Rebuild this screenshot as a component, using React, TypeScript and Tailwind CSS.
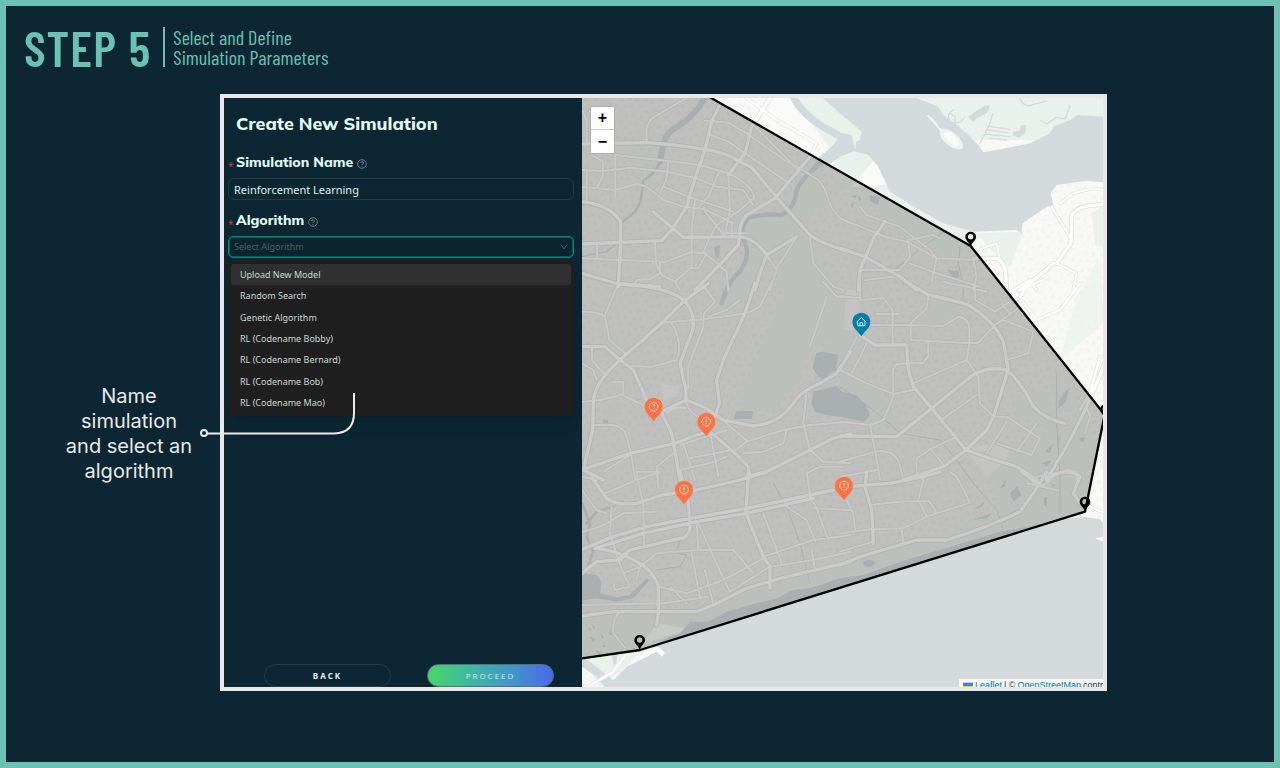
import React, { FC, useState } from "react";

const algorithms = [
  "Upload New Model",
  "Random Search",
  "Genetic Algorithm",
  "RL (Codename Bobby)",
  "RL (Codename Bernard)",
  "RL (Codename Bob)",
  "RL (Codename Mao)",
];

// map drawing is split in tiles, every tile has its own origin
const TILE_B = "translate(780 0)";
const TILE_C = "translate(0 570)";
const TILE_D = "translate(780 570)";
const TILE_E = "translate(0 1140)";
const TILE_F = "translate(780 1140)";

const BOUNDARY = "M-40 -40L280 -40L390 22L1172 468L1574 974L1515 1265L180 1680L-40 1712Z";

interface ITileRoads {
  tile?: string;
  main: string;
  minor: string;
}

const roads: ITileRoads[] = [
  {
    main:
      "M6 162 L200 158 Q300 165 375 178 Q440 188 480 215 L515 232 L590 322 L690 435 Q730 465 812 485 " +
      "M418 48 L395 95 L375 180 L345 265 L320 350 L275 420 L245 452 L6 462 M6 335 Q90 345 122 395 L122 458 L115 590 " +
      "M570 24 L515 110 L495 190 L445 255 M690 200 L585 325 L500 375 Q478 395 478 440 L475 465 L400 545 L345 600 " +
      "M220 365 L310 442 L475 440 Q520 440 560 495 L540 550 L525 600 M650 440 L565 492 M6 550 L115 582 L240 590",
    minor:
      "M375 92 L445 98 L500 130 L620 215 L660 235 L715 270 Q735 290 745 330 Q765 385 812 400 " +
      "M390 135 L445 155 L495 190 L620 275 M525 110 L655 240 M106 195 L265 213 L360 225 L440 248 Q520 285 522 325 L470 368 L410 405 L385 450 " +
      "M6 240 L70 243 L150 233 L262 245 L350 265 L410 290 L490 300 L520 345 M20 240 L20 330 M36 195 L70 215 L68 260 L50 295 M106 195 L106 320 " +
      "M6 290 L106 300 L170 282 L200 290 L250 330 L310 350 L372 357 L460 400 M265 213 L260 265 L240 310 M250 290 L325 320 L460 365 " +
      "M418 245 L385 320 L352 355 M445 255 L450 360 L435 430 M372 350 L375 365 L435 440 M345 330 L335 420 L335 530 " +
      "M320 24 L215 85 L200 110 L200 158 M6 60 L20 90 L20 160 M225 455 L228 520 L245 555 L285 575 M6 505 L120 510 L260 515 L330 487 L375 490 L440 545 L445 600 " +
      "M240 520 L240 550 L210 568 L170 570 L160 590 M285 575 L330 535 L355 535 L380 490 M285 575 L300 600 M425 430 L500 430 M455 395 L455 440 " +
      "M560 495 L590 540 L570 600 M650 440 L590 535 M690 445 L700 520 L760 590 L790 600 M50 462 L52 505 M385 450 L370 490",
  },
  {
    tile: TILE_B,
    main:
      "M0 475 L75 500 L180 560 L230 600 M135 395 L100 445 L60 540 L55 600 M640 520 L595 560 L540 600 M795 345 Q720 340 695 375 L693 460 L650 520 " +
      "M400 505 L470 505 Q495 515 497 550 L500 600",
    minor:
      "M0 385 L135 440 L200 455 L290 505 L400 510 M135 395 L180 410 L270 480 L290 505 L275 575 M205 450 L280 435 L300 445 M60 350 L80 375 L135 395 " +
      "M60 540 L180 540 L210 500 L205 450 M210 520 L290 550 L420 590 M75 570 L160 560 M400 505 L410 560 L400 600 M470 460 L478 505 M415 480 L470 460 " +
      "M695 450 L635 350 M795 300 L760 295 L700 310 L660 340 M650 520 L710 550 L700 600 M570 570 L590 600",
  },
  {
    tile: TILE_C,
    main:
      "M6 570 L150 520 L285 490 L350 465 L390 455 M385 10 L310 65 L245 130 L120 240 Q40 310 40 370 L38 450 L10 570 L70 600 " +
      "M6 200 L75 200 L120 240 L160 270 L200 360 L245 400 L275 460 L300 600 M115 10 L200 20 Q290 35 320 70 Q345 100 338 150 L300 250 L318 330 L318 360 " +
      "M245 395 L318 360 L370 380 L430 420 L520 438 Q600 430 640 370 Q660 335 720 310 L770 280 L812 215 M525 10 L495 100 L430 240 L410 300 L418 370 L405 410 " +
      "M390 455 L460 515 L505 560 L510 590 M500 590 L560 575 L690 510 L760 475 L812 462",
    minor:
      "M6 95 Q60 95 75 110 L88 180 L135 220 M115 10 L75 105 M245 128 L370 118 L500 100 L540 80 L575 6 M365 10 L405 65 L372 100 L370 140 L325 260 L325 325 " +
      "M275 130 Q310 190 290 240 L215 260 L155 258 M6 365 L60 360 L125 345 L190 375 M70 435 L45 435 M70 435 Q130 430 140 470 L155 530 L165 600 " +
      "M6 250 L40 270 L50 300 M36 205 L36 240 L75 285 M95 305 L130 305 L130 340 M318 360 Q320 400 385 425 M385 110 L440 90 L480 60 " +
      "M260 400 Q285 375 318 385 M300 495 L440 450 M310 490 L345 600 M330 535 L455 510 M300 570 L405 545 L440 530 M390 455 L415 590 M460 515 L500 485 L610 450 L690 435 L812 425 " +
      "M430 420 L450 440 L505 485 M620 450 L610 490 L550 515 L490 520 M680 330 L670 430 L690 510 M690 510 L730 545 L812 550 M680 580 L720 560 L790 560 " +
      "M6 590 L50 600 M70 575 L150 525 M235 600 L230 560 L280 520 M165 575 L235 575 M730 6 L770 50 L812 50 M740 50 L690 200",
  },
  {
    tile: TILE_D,
    main:
      "M0 468 L170 470 L275 385 L380 300 Q430 255 500 270 Q540 300 580 380 Q620 420 675 430 M200 6 L265 45 Q340 60 385 75 Q460 120 490 185 L505 270 L460 410 L440 450 L378 510 L310 560 L190 600 " +
      "M200 195 L205 270 L220 320 L275 385 L378 510 L450 535 L530 560 L590 600 M60 165 L105 195 L200 195 M795 250 L740 380 L690 480 L620 600",
    minor:
      "M60 6 L60 60 L130 55 L158 90 L158 190 M95 135 L210 135 L310 138 L355 110 Q390 115 388 150 L388 190 L380 240 L300 275 L220 310 " +
      "M265 45 L260 85 L212 130 L212 180 L390 190 L415 188 L465 135 L540 80 M110 102 L175 102 M60 55 L0 48 M50 170 L0 270 L80 310 L160 342 L220 330 " +
      "M80 190 L35 280 M265 185 L265 230 L250 248 L170 252 L158 270 L160 350 L130 420 L90 435 L0 425 M380 240 L415 290 L420 370 L460 410 " +
      "M310 415 L410 345 M90 435 L105 510 L120 600 M0 545 L105 515 Q170 505 180 560 L190 600 M0 590 L110 570 M405 6 L405 60 L465 95 L510 65 " +
      "M310 6 L380 20 L440 35 M465 135 L490 120 L580 155 L565 220 L505 238 M485 70 L510 100 M460 410 L500 410 L600 475 L575 525 L470 490 " +
      "M590 430 L530 515 M500 425 L440 520 M340 475 L275 505 L230 535 L230 570 M275 510 L315 560 M620 600 L680 570 L710 575 L710 600 M740 380 L750 410 L735 460",
  },
  {
    tile: TILE_E,
    main:
      "M36 24 L80 85 Q110 108 170 100 L245 75 L350 60 L480 30 L560 6 M6 238 L100 200 L200 170 L330 145 L500 115 L620 90 L760 60 " +
      "M45 235 L190 190 L350 155 L500 130 L700 85 M505 6 L498 130 L550 260 L570 290 L570 355 M6 438 L100 425 L350 425 L400 405 L500 355 L600 325 L812 275 " +
      "M45 235 Q110 240 170 275 Q220 300 235 350 L235 430 L230 465 M6 310 L50 275 L120 270 L150 240 M300 6 L325 95 L330 170 Q325 205 300 205 L150 240 L120 265",
    minor:
      "M170 6 L190 110 L192 225 M75 70 L170 30 L240 6 M235 55 L230 6 M95 110 L90 190 L110 255 L130 310 L150 350 L105 360 L100 340 M6 185 Q40 180 80 160 L130 130 L230 125 " +
      "M350 155 L355 240 L230 250 L180 290 M355 160 L430 325 L450 365 M355 240 L460 240 L520 310 M235 350 L320 370 L430 330 L550 265 M335 250 L360 385 M375 300 L400 405 " +
      "M450 365 L570 290 M550 130 L605 280 M570 290 L700 270 L812 245 M550 260 L700 210 L812 195 M615 90 L620 110 L680 150 L705 215 M690 80 L710 115 L745 210 M690 75 L680 6 " +
      "M700 115 L812 120 M695 240 L705 300 M6 405 L250 400 L385 380 M120 425 Q95 450 100 490 L140 540 M130 310 L180 290 L170 330 M270 350 L320 400 M6 60 L50 120 L80 130",
  },
  {
    tile: TILE_F,
    main:
      "M0 285 L60 260 L230 210 L320 210 Q450 170 540 125 L580 70 L620 6 M20 50 L150 40 L250 20 L300 6 M75 50 L95 120 L100 220 M80 6 L75 50 " +
      "M545 6 L600 45 M620 24 Q680 -10 720 20 L700 70 L720 100",
    minor:
      "M0 190 L100 178 L190 175 L260 140 L390 98 L350 20 L330 6 M230 6 L250 30 L235 90 L260 140 M90 105 L180 95 L265 92 Q280 110 290 130 M20 90 L40 130 L45 180 " +
      "M185 180 L190 215 M0 245 L100 215 M560 40 L650 60 M575 30 Q600 10 625 20 Q640 30 610 45 Q580 45 575 30 M740 105 L795 130",
  },
];

const outerRoads =
  "M500 24L590 90L710 160L690 200M1350 570L1300 600L1370 690L1440 660L1500 580M1310 640L1340 590L1390 570M1560 800L1530 910L1500 960M6 1800L100 1745L140 1690";

interface IPin {
  x: number;
  y: number;
}

const alerts: IPin[] = [
  { x: 221, y: 924 },
  { x: 379, y: 969 },
  { x: 312, y: 1173 },
  { x: 792, y: 1161 },
];

const corners: IPin[] = [
  { x: 1172, y: 426 },
  { x: 1576, y: 944 },
  { x: 1515, y: 1221 },
  { x: 179, y: 1636 },
];

const PIN_PATH = "M0 70 C-8 55 -27 46 -27 26 A27 27 0 0 1 27 26 C27 46 8 55 0 70Z";

const CityMap: FC = () => (
  <svg
    className="absolute inset-0 h-full w-full"
    viewBox="6 24 1563 1767"
    preserveAspectRatio="xMidYMid slice"
    role="img"
    aria-label="Simulation area"
  >
    <defs>
      <pattern id="blocks" width="64" height="52" patternUnits="userSpaceOnUse" patternTransform="rotate(-14)">
        <path d="M3 4h14v9h-14z M26 12h9v12h-9z M46 3h10v8h-10z M6 30h9v8h-9z M32 36h14v6h-14z M52 24h7v8h-7z" fill="#000000" fillOpacity=".018" />
      </pattern>
    </defs>
    <rect x="0" y="0" width="1600" height="1800" fill="#f8f8f7" />
    <path d={BOUNDARY} fill="#efefed" />
    <rect x="0" y="0" width="1600" height="1800" fill="url(#blocks)" />

    {/* parks and forest */}
    <g fill="#eaf1ec">
      <path d="M640 24H1010V300L1180 430L1330 425L1290 530L1260 510L1200 440L1172 468L1100 500L1050 450L900 380L850 330L790 290L760 190Z" />
      <path d="M1000 24H1580V150H1000Z M1535 370L1570 350V470L1545 465Z" />
      <path d="M500 400L580 370L640 355L680 260L735 310L742 340L690 375L640 440L570 485L510 440Z" />
      <path d="M500 470L550 510L530 600L430 680L400 690L430 610Z M620 450L690 460L760 600L730 640L640 570L590 600Z" />
      <path d="M640 570L740 600L745 640L640 900L560 960L470 955L600 640Z M700 780L812 700V600L745 620Z M780 720L830 740L790 830L700 850Z" />
      <path d="M1030 650L1110 620L1160 650L1060 710Z M1300 930L1380 900L1450 1000L1400 1010L1310 980Z M1420 860L1460 850L1500 960L1430 960Z" />
      <path d="M1240 1130L1440 1000L1520 1010L1560 1080L1500 1280L1180 1360L780 1460L780 1420L1100 1330L1250 1270Z" />
      <path d="M0 1570L250 1575L380 1545L780 1425V1470L300 1650L180 1690L150 1720L60 1790L0 1700Z" />
      <path d="M75 960L125 940L110 1000L75 1005Z M200 320L280 370L310 410L230 380Z M90 730L140 790L110 800Z M120 180L240 190L230 225L125 210Z" />
      <path d="M780 830L900 900L960 1010L860 1000L780 970Z M1490 620L1560 500L1570 700L1440 810Z" fillOpacity=".6" />
    </g>
    <path d="M815 290L890 200L905 260L930 280L880 290Z M500 40L580 24L630 24L700 110L720 160L690 200L600 130Z M350 1620L230 1600L190 1660L260 1640Z" fill="#fafaf8" />
    <path d="M1120 1040L1180 1110L1220 1160L1280 1110L1285 1080L1240 1060L1180 1070Z M800 600H840V720H790Z M240 880L300 890L290 920L250 930Z" fill="#f6f5f2" />

    {/* water */}
    <g fill="#d4dadc" stroke="none">
      <path
        transform={TILE_B}
        d="M-52 24L0 70L65 125L60 150L48 155L46 185L85 195L115 230L150 305L230 355L310 400L400 425L530 420L545 430L548 400L620 350L640 347L632 310L650 285L740 272L795 277V80L712 75L690 90L640 110L630 130L570 160L480 178L430 187L415 165L385 135L345 100L310 75L295 50L230 24Z"
      />
      <path d="M785 128L815 135L826 182L780 200L750 222L730 215L700 250L690 240L720 200L760 165Z" />
      <path transform={TILE_C} d="M710 220L725 215L775 224L768 270L745 282L735 300L715 290L698 265L704 235Z" />
      <path transform={TILE_C} d="M700 335L770 318L785 335L830 345L860 380L870 408L850 425L800 415L780 410L740 405L705 395L694 370Z" />
      <path transform={TILE_C} d="M470 393H520L515 417H460Z M70 418L84 420L84 433L70 432Z M450 6L440 50L425 45Z" />
      <path transform={TILE_D} d="M680 330L690 325L675 370L655 385L660 355Z M615 515L640 490L630 520Z M605 550L635 540L620 560Z M655 460L660 475L655 490Z M715 475L735 470L730 490Z" />
      <path transform={TILE_E} d="M6 310L50 315L65 335L60 370L110 382L150 375L200 325L210 330L160 385L110 395L50 385L6 392Z M6 560L50 590L110 640L80 660L50 620L6 590Z" />
      <path transform={TILE_E} d="M36 465l10 8-6 5z M60 490l12 10-6 6z M30 500l16 6-8 8z M90 480l8 14-8 2z M45 540l20 8-8 8z M95 555l16-4-2 30-8 6z M70 520l8 10-10 2z M26 470l8 10-8 2z" />
      <path
        transform={TILE_E}
        d="M70 660L140 590L200 560L230 545L245 560L255 548L235 530L205 535L260 505L300 490L330 455L385 455L440 425L530 400L590 385L640 360L690 355L780 325L850 315L960 275L1080 240L1160 215L1260 185L1320 175L1440 150L1510 140L1560 148L1575 165V200L1545 205L1580 220V680H70Z"
      />
      <path transform={TILE_F} d="M68 280a18 10 0 1 0 37 0a18 10 0 1 0 -37 0 M400 120L435 95L425 110Z M395 150L455 130L440 145Z M510 70L530 50L545 75L520 95Z M535 120L560 105L545 130Z M610 85L622 80L620 110L612 105Z M630 40L650 45L640 50Z M480 55L500 25L495 50Z" />
      <path d="M402 470L420 466L418 500L408 506Z M1115 545L1135 540L1138 560L1118 568Z M815 320l16-8-4 12z M835 315l10 14-8 4z M868 315l32 6-6 24-24-12z M810 345l12-6-4 16z M1100 538L1120 542L1118 560Z" />
      <path d="M1165 80L1210 48L1230 46L1222 68L1190 85L1178 97Z M1300 125L1318 122L1322 107L1338 104L1336 128L1318 143L1300 138Z" />
    </g>
    <g fill="none" stroke="#d4dadc" strokeLinejoin="round" strokeLinecap="round">
      <path d="M640 20Q660 65 725 108L800 150" strokeWidth="22" />
      <path d="M790 160L735 210Q670 255 650 300Q645 355 605 375Q555 370 510 382Q480 400 490 445L500 475Q505 510 480 545Q450 570 435 610L425 640" strokeWidth="13" />
      <path d="M375 24Q345 75 300 105Q260 125 250 160L240 215" strokeWidth="18" />
      <path d="M240 215Q225 255 190 270L185 310Q185 335 165 365L130 395" strokeWidth="7" />
      <path d="M6 500L50 490L80 485L110 460M1110 70l15 10 0 20 18-5 10-12M1200 160l30-60 8-30M1230 110l60 8M1225 120l60 8M1215 132l75 8M1230 145l50 5M1380 90l20 12 30-20 25 5 15-40M1320 24q10 30 40 20t40-10M1120 60q-30 20 0 40" strokeWidth="4" />
      <path d="M6 1240L30 1300L20 1340L40 1385L20 1440M20 1300L50 1265L100 1250" strokeWidth="8" />
      <path d="M300 1340L290 1390L320 1395L300 1430L230 1440M580 1180L620 1250L660 1360L690 1480M780 890L880 960L960 1030L1080 1050L1130 1110L1180 1180L1250 1260L1270 1320M1430 850L1430 1000L1440 1150L1440 1270M1140 470L1135 520L1150 590L1148 640M940 540L1070 440L1100 420" strokeWidth="3" />
    </g>
    <path transform={TILE_B} d="M258 75Q275 72 300 115Q335 118 350 135Q372 155 368 175Q350 185 320 162Q298 145 298 120Z" fill="#eef3ef" />
    <path transform={TILE_B} d="M310 130L335 125L360 160L350 172L320 150Z" fill="#fafaf8" />

    {/* street network, casing first */}
    <g fill="none" strokeLinejoin="round" strokeLinecap="round">
      {roads.map((r, i) => (
        <g key={i} transform={r.tile}>
          <path d={r.minor} stroke="#e2e2e2" strokeWidth="10" />
          <path d={r.main} stroke="#dfdfdf" strokeWidth="15" />
        </g>
      ))}
      <path d={outerRoads} stroke="#e6e6e6" strokeWidth="12" />
      {roads.map((r, i) => (
        <g key={i} transform={r.tile}>
          <path d={r.minor} stroke="#fcfcfc" strokeWidth="6" />
          <path d={r.main} stroke="#fefefe" strokeWidth="10" />
        </g>
      ))}
      <path d={outerRoads} stroke="#ffffff" strokeWidth="7" />
    </g>

    {/* simulation boundary */}
    <path d={BOUNDARY} fill="#000000" fillOpacity=".2" stroke="#000000" strokeWidth="7" strokeLinejoin="round" />
    {corners.map((p) => (
      <g key={p.x} transform={`translate(${p.x} ${p.y})`}>
        <path
          fillRule="evenodd"
          d="M0 44C-4 30 -16 26 -16 14A16 15 0 0 1 16 14C16 26 4 30 0 44Z M-8 14a8 8 0 1 0 16 0a8 8 0 1 0 -16 0"
        />
      </g>
    ))}
    {alerts.map((p) => (
      <g key={p.x} transform={`translate(${p.x} ${p.y})`}>
        <path d={PIN_PATH} fill="#ff7043" />
        <circle cx="0" cy="26" r="13" fill="none" stroke="#ffe3d6" strokeWidth="3" />
        <path d="M0 19V27M0 30V33" stroke="#ffe3d6" strokeWidth="4" />
      </g>
    ))}
    <g transform="translate(844 669)">
      <path d={PIN_PATH} fill="#047dab" />
      <path
        d="M-14 27L0 14L14 27M-11 25V38H11V25M-4 38V29H4V38"
        fill="none"
        stroke="#c9eaf3"
        strokeWidth="3"
        strokeLinejoin="round"
        strokeLinecap="round"
      />
    </g>
  </svg>
);

interface ILabel {
  htmlFor: string;
  text: string;
}

const FieldLabel: FC<ILabel> = ({ htmlFor, text }) => (
  <div className="flex h-5 items-center">
    <span className="w-2 pt-2 text-[10px] leading-none text-[#d4383f]">*</span>
    <label htmlFor={htmlFor} className="font-[Mulish,'Open_Sans',sans-serif] text-sm leading-5 font-extrabold text-[#e2fbf3]">
      {text}
    </label>
    <svg className="mt-1 ml-1 size-2.5" viewBox="0 0 20 20" fill="none" stroke="#6f8288" strokeWidth="1.8">
      <circle cx="10" cy="10" r="8.6" />
      <path d="M7.2 8A2.8 2.8 0 1 1 10 11V12.4M10 14V15.8" />
    </svg>
  </div>
);

const SimulationForm: FC = () => {
  const [name, setName] = useState<string>("Reinforcement Learning");
  const [algorithm, setAlgorithm] = useState<string>("");

  return (
    <form className="flex flex-col pt-3.5 pr-2 pl-1 font-['Noto_Sans',sans-serif]" onSubmit={(e) => e.preventDefault()}>
      <h2 className="pl-2 font-[Mulish,'Open_Sans',sans-serif] text-lg leading-6 font-extrabold text-[#e2fbf3]">
        Create New Simulation
      </h2>
      <div className="mt-4">
        <FieldLabel htmlFor="name" text="Simulation Name" />
        <input
          id="name"
          type="text"
          className="mt-1.5 block h-[22px] w-full rounded-md border border-[#28383f] bg-transparent px-[5px] text-[11px] text-[#dff3ec] outline-none"
          value={name}
          onChange={({ target }) => setName(target.value)}
        />
      </div>
      <div className="mt-2.5">
        <FieldLabel htmlFor="algorithm" text="Algorithm" />
        <div className="relative mt-1.5">
          <select
            id="algorithm"
            className="block h-[22px] w-full appearance-none rounded-[5px] border border-[#0a8779] bg-[#0a2530] px-[5px] text-[9px] text-[#4c6067] ring-1 ring-[#0a5a58] outline-none ring-inset"
            value={algorithm}
            onChange={({ target }) => setAlgorithm(target.value)}
          >
            <option value="">Select Algorithm</option>
            {algorithms.map((a) => (
              <option key={a}>{a}</option>
            ))}
          </select>
          <svg className="pointer-events-none absolute top-2 right-1.5 h-1.5 w-2" viewBox="0 0 8 6" fill="none" stroke="#4c6067">
            <path d="M1 0.5L4 5L7 0.5" />
          </svg>
          <ul
            role="listbox"
            aria-label="Algorithm options"
            className="absolute top-full right-0 left-0 mt-0.5 grid h-[156px] auto-rows-fr rounded-md bg-[#1f1f1f] px-[3px] pt-1 pb-0.5 text-[9px] text-[#c9dad3] shadow-lg"
          >
            {algorithms.map((a, i) => (
              <li
                key={a}
                role="option"
                aria-selected={i === 0}
                onClick={() => setAlgorithm(a)}
                className="flex items-center rounded-[3px] px-[9px] leading-3 aria-selected:bg-[#303030]"
              >
                {a}
              </li>
            ))}
          </ul>
        </div>
      </div>
      <div className="mt-auto grid grid-cols-2 gap-9 pr-5 pl-9 font-['Open_Sans',sans-serif] text-[8px] tracking-[0.25em]">
        <button type="button" className="h-[23px] rounded-full border border-[#2c3b40] font-bold text-[#e2f3ee]">
          BACK
        </button>
        <button
          type="submit"
          className="h-[23px] rounded-full border border-[#55707a] bg-linear-to-r from-[#47d764] to-[#4c68ea] text-[#cfeee6]"
        >
          PROCEED
        </button>
      </div>
    </form>
  );
};

const MapPanel: FC = () => (
  <div className="relative overflow-hidden">
    <CityMap />
    <div className="absolute top-2 left-2 flex w-[25px] flex-col divide-y divide-[#cccccc] overflow-hidden rounded-xs border border-[#b0b0b0] bg-white">
      {["+", "−"].map((sign) => (
        <button
          key={sign}
          type="button"
          className="h-[23px] font-['Liberation_Sans',sans-serif] text-base leading-5 font-bold text-black"
        >
          {sign}
        </button>
      ))}
    </div>
    <div className="absolute right-0 -bottom-1.5 flex h-3.5 w-36 items-center gap-0.5 overflow-hidden bg-white/80 pl-1 font-['Liberation_Sans',sans-serif] text-[9px] whitespace-nowrap text-[#333333]">
      <svg className="h-2 w-2.5 shrink-0" viewBox="0 0 12 8">
        <path fill="#4c7be1" d="M0 0h12v4H0z" />
        <path fill="#ffd500" d="M0 4h12v3H0z" />
      </svg>
      <a href="#leaflet" className="text-[#0078a8]">Leaflet</a>
      <span>| ©</span>
      <a href="#osm" className="text-[#0078a8]">OpenStreetMap</a>
      <span>contributors</span>
    </div>
  </div>
);

const App: FC = () => (
  <div className="min-h-screen border-6 border-[#6bc1b4] bg-[#0c2733]">
    <header className="flex h-[88px] items-center px-[18px] pb-1.5 font-['Barlow_Condensed','Liberation_Sans_Narrow',sans-serif] text-[#6bc1b4]">
      <h1 className="text-[50px] leading-none font-semibold tracking-wide">STEP 5</h1>
      <p className="ml-3 border-l-2 border-[#6bc1b4] pl-2 text-xl leading-5">
        Select and Define
        <br />
        Simulation Parameters
      </p>
    </header>
    <main className="grid grid-cols-[214fr_887fr_167fr] pb-4">
      <div className="flex justify-end pt-[290px] pr-6">
        <p className="w-[134px] text-center font-[Inter,sans-serif] text-xl leading-[25px] text-[#e9ebea]">
          Name simulation and select an algorithm
        </p>
      </div>
      <section className="relative">
        <div className="grid aspect-[887/597] min-w-0 grid-cols-[358px_1fr] border-4 border-[#e9e8e6]">
          <SimulationForm />
          <MapPanel />
        </div>
        {/* callout line from the note to the option list */}
        <svg
          className="pointer-events-none absolute top-[298px] -left-5 h-[46px] w-[156px]"
          viewBox="0 0 156 46"
          fill="none"
          stroke="#ecebea"
          strokeWidth="2"
        >
          <circle cx="4" cy="41" r="3" />
          <path d="M7 41.5H134Q154 41 154 21V1" />
        </svg>
      </section>
    </main>
  </div>
);

export default App;
